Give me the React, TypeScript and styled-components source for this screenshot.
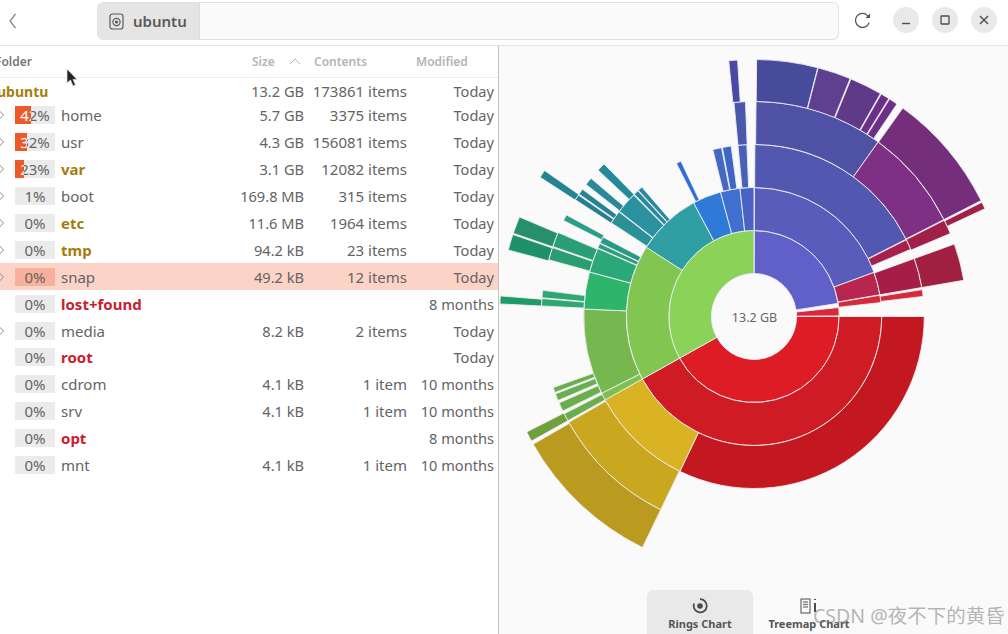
import React from "react";
import styled, { createGlobalStyle } from "styled-components";

const GlobalStyle = createGlobalStyle`
  html, body {
    margin: 0;
    height: 100%;
    background: #fff;
    overflow: hidden;
  }
  * { box-sizing: border-box; }
`;

const Window = styled.div`
  position: relative;
  width: 1008px;
  height: 634px;
  display: flex;
  flex-direction: column;
  font-family: "Noto Sans", "Noto Sans CJK SC", sans-serif;
  color: #646464;
  overflow: hidden;
`;

const Header = styled.header`
  height: 46px;
  flex: none;
  display: flex;
  align-items: flex-start;
  padding: 2px 11px 0 8px;
  background: #fff;
  border-bottom: 1px solid #e4e4e4;
  box-shadow: 0 1px 1px #f0f0f0;
`;

const BackButton = styled.div`
  width: 14px;
  height: 37px;
  display: flex;
  align-items: center;
  color: #8a8a8a;
`;

const PathBar = styled.div`
  width: 742px;
  height: 38px;
  margin-left: 75px;
  display: flex;
  background: #fafafa;
  border: 1px solid #e2e2e2;
  border-radius: 6px;
  overflow: hidden;
`;

const PathCrumb = styled.div`
  width: 102px;
  display: flex;
  align-items: center;
  gap: 9px;
  padding-left: 11px;
  background: #e5e5e5;
  border-right: 1px solid #dcdcdc;
  font-size: 15px;
  font-weight: 600;
  color: #5a5a5a;
`;

const RefreshButton = styled.div`
  width: 20px;
  height: 37px;
  margin-left: 15px;
  display: flex;
  align-items: center;
  color: #555;
`;

const WindowButtons = styled.div`
  display: flex;
  gap: 13px;
  margin-left: 19px;
  margin-top: 5px;
`;

const RoundButton = styled.div`
  width: 26px;
  height: 26px;
  border-radius: 50%;
  background: #e9e9e9;
  display: flex;
  align-items: center;
  justify-content: center;
  color: #4d4d4d;
`;

const Body = styled.div`
  flex: 1;
  display: flex;
  min-height: 0;
`;

const TablePanel = styled.section`
  width: 499px;
  flex: none;
  background: #fff;
  border-right: 1px solid #c4c4c4;
  overflow: hidden;
`;

const Table = styled.div`
  width: 506px;
  margin-left: -8px;
`;

const columns = "23px 40px 1fr 90px 103px 87px";

const HeadRow = styled.div`
  height: 32px;
  display: grid;
  grid-template-columns: ${columns};
  align-items: center;
  padding-right: 4px;
  border-bottom: 1px solid #ececec;
  font-size: 12px;
  font-weight: 600;
  color: #b4b4b4;
`;

const HeadFolder = styled.div`
  grid-column: 1 / 4;
  padding-left: 3px;
  color: #777;
`;

const HeadSize = styled.div`
  display: flex;
  align-items: center;
  justify-content: space-between;
  padding: 0 3px 0 38px;
`;

const HeadCell = styled.div<{ $inset: number }>`
  padding-left: ${({ $inset }) => $inset}px;
`;

const RootRow = styled.div`
  height: 24px;
  padding-top: 2px;
  display: grid;
  grid-template-columns: ${columns};
  align-items: center;
  padding-right: 4px;
  font-size: 15px;
  line-height: 20px;
`;

const Row = styled(RootRow)<{ $active?: boolean }>`
  height: 26.9px;
  padding-top: 0;
  background: ${({ $active }) => ($active ? "#fbd3c7" : "transparent")};
`;

const RootName = styled.div`
  grid-column: 1 / 4;
  padding-left: 5px;
  padding-top: 1px;
  font-size: 14px;
  font-weight: 700;
  color: #a67d0c;
`;

const Toggle = styled.div`
  padding-left: 5px;
  display: flex;
  align-items: center;
  color: #8a8a8a;
`;

const Bar = styled.div<{ $active?: boolean }>`
  position: relative;
  width: 40px;
  height: 18px;
  background: ${({ $active }) => ($active ? "#f7b09b" : "#ebebeb")};
`;

const BarLabel = styled.span`
  display: block;
  width: 40px;
  line-height: 18px;
  text-align: center;
  font-size: 15px;
`;

const BarFill = styled.div`
  position: absolute;
  left: 0;
  top: 0;
  bottom: 0;
  overflow: hidden;
  background: #ee5a27;
  color: #fff;
`;

const Name = styled.div<{ $tone?: "warn" | "error" }>`
  padding-left: 6px;
  font-weight: ${({ $tone }) => ($tone ? 700 : 400)};
  color: ${({ $tone }) =>
    $tone === "warn" ? "#a67d0c" : $tone === "error" ? "#c9202f" : "#646464"};
`;

const Cell = styled.div<{ $wide?: boolean }>`
  text-align: right;
  white-space: nowrap;
  font-size: ${({ $wide }) => ($wide ? 15 : 14.6)}px;
`;

const ChartPanel = styled.section`
  flex: 1;
  display: flex;
  flex-direction: column;
  background: #fafafa;
  min-width: 0;
`;

const ChartArea = styled.div`
  height: 544px;
  flex: none;
`;

const Switcher = styled.div`
  flex: 1;
  display: flex;
  padding-left: 148px;
`;

const SwitchButton = styled.div<{ $active?: boolean }>`
  width: 106px;
  margin-left: ${({ $active }) => ($active ? 0 : 3)}px;
  display: flex;
  flex-direction: column;
  align-items: center;
  padding-top: 6px;
  border-radius: 6px 6px 0 0;
  background: ${({ $active }) => ($active ? "#e9e9e9" : "transparent")};
  font-size: 11px;
  line-height: 15px;
  font-weight: 700;
  color: #555;
  white-space: nowrap;
`;

const SwitchIcon = styled.div`
  height: 20px;
  display: flex;
  align-items: center;
  color: #4a4a4a;
`;

const Watermark = styled.div`
  position: absolute;
  left: 813px;
  top: 603px;
  font-size: 19.5px;
  line-height: 26px;
  color: rgba(120, 120, 120, 0.55);
  white-space: nowrap;
`;

const Pointer = styled.svg`
  position: absolute;
  left: 66px;
  top: 68px;
`;

const CX = 754;
const CY = 316.5;
const SX = 0.99;
const RADII = [43, 86, 129, 172, 215, 257];

const arc = (ring: number, start: number, end: number) => {
  const a0 = (start * Math.PI) / 180;
  const a1 = (end * Math.PI) / 180;
  const r0 = RADII[ring - 1];
  const r1 = RADII[ring];
  const pt = (r: number, a: number) =>
    `${(CX + SX * r * Math.sin(a)).toFixed(2)} ${(CY - r * Math.cos(a)).toFixed(2)}`;
  const big = end - start > 180 ? 1 : 0;
  return [
    `M${pt(r0, a0)}`,
    `A${SX * r0} ${r0} 0 ${big} 1 ${pt(r0, a1)}`,
    `L${pt(r1, a1)}`,
    `A${SX * r1} ${r1} 0 ${big} 0 ${pt(r1, a0)}`,
    "Z",
  ].join(" ");
};

// ring, start angle, end angle (clockwise from 12 o'clock), colour
const segments: [number, number, number, string][] = [
  [1, 0.2, 81.2, "#6060c8"],
  [1, 84, 89.6, "#d8283c"],
  [1, 90, 241, "#dd1c26"],
  [1, 241, 360, "#8bd358"],

  [2, 0.2, 70, "#5a5cbc"],
  [2, 70, 80.3, "#b8264f"],
  [2, 80.5, 83.8, "#d8283c"],
  [2, 90, 241, "#cf1c24"],
  [2, 241, 302.5, "#80c650"],
  [2, 302.5, 331.8, "#2f9fa3"],
  [2, 331.8, 344.8, "#2f7ad8"],
  [2, 344.8, 353.7, "#3f6fcf"],
  [2, 353.7, 360, "#4a62c4"],

  [3, 0.3, 63.3, "#5258b0"],
  [3, 63.5, 67, "#a8204c"],
  [3, 70.3, 80.3, "#a61e48"],
  [3, 81, 83.3, "#d8283c"],
  [3, 90, 205.8, "#c41820"],
  [3, 205.8, 241, "#d9b324"],
  [3, 241, 243.5, "#7cc050"],
  [3, 243.5, 272.5, "#76b84f"],
  [3, 272.5, 285, "#2db56b"],
  [3, 285, 293.3, "#2ca878"],
  [3, 293.5, 295.1, "#2a9f7e"],
  [3, 295.3, 297.5, "#2a9a80"],
  [3, 303, 307.5, "#2a9196"],
  [3, 307.7, 315, "#2b90a0"],
  [3, 315.3, 317, "#288a9e"],
  [3, 317.2, 318.8, "#288a9e"],
  [3, 332.9, 334.6, "#2f6ed8"],
  [3, 346, 349, "#4468c4"],
  [3, 349.3, 352.3, "#3f66c4"],
  [3, 354.6, 357.6, "#4860bc"],

  [4, 0.55, 35.7, "#4f52a4"],
  [4, 35.7, 63.2, "#7e3085"],
  [4, 63.4, 67.3, "#a02048"],
  [4, 70.3, 80.3, "#a02042"],
  [4, 206, 240.5, "#c9a820"],
  [4, 241, 243.1, "#6aae4e"],
  [4, 243.9, 246.3, "#6aae4e"],
  [4, 247, 248.9, "#6aae4e"],
  [4, 249.3, 250.7, "#6aae4e"],
  [4, 272.8, 274.8, "#2da870"],
  [4, 275, 277, "#2da870"],
  [4, 285.3, 288.7, "#2a9e72"],
  [4, 289, 293, "#2a9e76"],
  [4, 296.5, 298.2, "#2a9e86"],
  [4, 302.9, 304.4, "#257f90"],
  [4, 304.7, 306.3, "#25858f"],
  [4, 307.9, 310, "#2a8898"],
  [4, 312.9, 315.2, "#228a98"],
  [4, 354.6, 357.7, "#4a58ac"],

  [5, 0.6, 14.5, "#484a9c"],
  [5, 14.6, 22.2, "#5e3f90"],
  [5, 22.4, 29.8, "#603a88"],
  [5, 30, 32, "#6c3088"],
  [5, 32.2, 34.2, "#6c3088"],
  [5, 35.8, 63.2, "#742e7c"],
  [5, 63.6, 65.2, "#a02048"],
  [5, 206, 240.2, "#bb9a20"],
  [5, 241, 243.3, "#6fa03c"],
  [5, 272.8, 274.6, "#1f9a6a"],
  [5, 285, 288.6, "#1e9168"],
  [5, 288.9, 292.8, "#26906a"],
  [5, 302.8, 304.6, "#268490"],
  [5, 354.3, 356.3, "#4a4aa4"],
];

type Item = {
  name: string;
  pct: number;
  size?: string;
  contents?: string;
  modified: string;
  expandable?: boolean;
  tone?: "warn" | "error";
  active?: boolean;
};

const items: Item[] = [
  { name: "home", pct: 42, size: "5.7 GB", contents: "3375 items", modified: "Today", expandable: true },
  { name: "usr", pct: 32, size: "4.3 GB", contents: "156081 items", modified: "Today", expandable: true },
  { name: "var", pct: 23, size: "3.1 GB", contents: "12082 items", modified: "Today", expandable: true, tone: "warn" },
  { name: "boot", pct: 1, size: "169.8 MB", contents: "315 items", modified: "Today", expandable: true },
  { name: "etc", pct: 0, size: "11.6 MB", contents: "1964 items", modified: "Today", expandable: true, tone: "warn" },
  { name: "tmp", pct: 0, size: "94.2 kB", contents: "23 items", modified: "Today", expandable: true, tone: "warn" },
  { name: "snap", pct: 0, size: "49.2 kB", contents: "12 items", modified: "Today", expandable: true, active: true },
  { name: "lost+found", pct: 0, modified: "8 months", tone: "error" },
  { name: "media", pct: 0, size: "8.2 kB", contents: "2 items", modified: "Today", expandable: true },
  { name: "root", pct: 0, modified: "Today", tone: "error" },
  { name: "cdrom", pct: 0, size: "4.1 kB", contents: "1 item", modified: "10 months" },
  { name: "srv", pct: 0, size: "4.1 kB", contents: "1 item", modified: "10 months" },
  { name: "opt", pct: 0, modified: "8 months", tone: "error" },
  { name: "mnt", pct: 0, size: "4.1 kB", contents: "1 item", modified: "10 months" },
];

const Stroke = { fill: "none", stroke: "currentColor" };

export default function App() {
  return (
    <Window>
      <GlobalStyle />
      <Header>
        <BackButton>
          <svg width="9" height="16" viewBox="0 0 9 16" {...Stroke} strokeWidth="1.3">
            <path d="M7.5 1 2 8l5.5 7" />
          </svg>
        </BackButton>
        <PathBar>
          <PathCrumb>
            <svg width="15" height="17" viewBox="0 0 15 17" {...Stroke} strokeWidth="1.2">
              <rect x="1" y="1" width="13" height="15" rx="2.5" />
              <circle cx="7.5" cy="9" r="3.6" />
              <circle cx="7.5" cy="9" r="1" fill="currentColor" />
            </svg>
            ubuntu
          </PathCrumb>
        </PathBar>
        <RefreshButton>
          <svg width="18" height="18" viewBox="0 0 18 18" {...Stroke} strokeWidth="1.2">
            <path d="M15.2 10.5A7 7 0 1 1 13.6 3.6L15.5 5.5" />
            <path d="M16 1.5v4.5h-4.5" fill="currentColor" stroke="none" />
          </svg>
        </RefreshButton>
        <WindowButtons>
          <RoundButton>
            <svg width="10" height="10" viewBox="0 0 10 10" {...Stroke} strokeWidth="1.4">
              <path d="M1 8.5h8" />
            </svg>
          </RoundButton>
          <RoundButton>
            <svg width="10" height="10" viewBox="0 0 10 10" {...Stroke} strokeWidth="1.3">
              <rect x="1" y="1" width="8" height="8" rx="0.5" />
            </svg>
          </RoundButton>
          <RoundButton>
            <svg width="10" height="10" viewBox="0 0 10 10" {...Stroke} strokeWidth="1.4">
              <path d="M1 1l8 8M9 1 1 9" />
            </svg>
          </RoundButton>
        </WindowButtons>
      </Header>
      <Body>
        <TablePanel>
          <Table>
            <HeadRow>
              <HeadFolder>Folder</HeadFolder>
              <HeadSize>
                Size
                <svg width="12" height="7" viewBox="0 0 12 7" {...Stroke} strokeWidth="1">
                  <path d="M1 6l5-5 5 5" />
                </svg>
              </HeadSize>
              <HeadCell $inset={10}>Contents</HeadCell>
              <HeadCell $inset={9}>Modified</HeadCell>
            </HeadRow>
            <RootRow>
              <RootName>ubuntu</RootName>
              <Cell>13.2 GB</Cell>
              <Cell $wide>173861 items</Cell>
              <Cell>Today</Cell>
            </RootRow>
            {items.map((item) => (
              <Row key={item.name} $active={item.active}>
                <Toggle>
                  {item.expandable && (
                    <svg width="7" height="12" viewBox="0 0 7 12" {...Stroke} strokeWidth="1">
                      <path d="M1.5 1l5 5-5 5" />
                    </svg>
                  )}
                </Toggle>
                <Bar $active={item.active}>
                  <BarLabel>{item.pct}%</BarLabel>
                  {item.pct > 1 && (
                    <BarFill style={{ width: `${item.pct * 0.375}px` }}>
                      <BarLabel>{item.pct}%</BarLabel>
                    </BarFill>
                  )}
                </Bar>
                <Name $tone={item.tone}>{item.name}</Name>
                <Cell>{item.size}</Cell>
                <Cell $wide>{item.contents}</Cell>
                <Cell>{item.modified}</Cell>
              </Row>
            ))}
          </Table>
        </TablePanel>
        <ChartPanel>
          <ChartArea>
            <svg width="509" height="544" viewBox="499 46 509 544">
              {segments.map(([ring, start, end, color]) => (
                <path
                  key={`${ring}-${start}`}
                  d={arc(ring, start, end)}
                  fill={color}
                  stroke="#ececf0"
                  strokeWidth="0.9"
                />
              ))}
              <text
                x={754.5}
                y={CY + 5}
                textAnchor="middle"
                fontSize="12.5"
                fill="#666"
                fontFamily="Noto Sans, sans-serif"
              >
                13.2 GB
              </text>
            </svg>
          </ChartArea>
          <Switcher>
            <SwitchButton $active>
              <SwitchIcon>
                <svg width="18" height="18" viewBox="0 0 18 18" {...Stroke} strokeWidth="1.8">
                  <circle cx="9" cy="9" r="2.8" fill="currentColor" stroke="none" />
                  <path d="M3 6.5A6.6 6.6 0 1 0 9 2.2" />
                </svg>
              </SwitchIcon>
              Rings Chart
            </SwitchButton>
            <SwitchButton>
              <SwitchIcon>
                <svg width="18" height="18" viewBox="0 0 18 18" {...Stroke} strokeWidth="1">
                  <rect x="1" y="2" width="9" height="14" />
                  <path d="M3 5h5M3 7.5h5M3 10h5" strokeWidth="1.4" stroke="#888" />
                  <path d="M15 2v1M15 6v9" strokeWidth="1.6" stroke="#222" />
                </svg>
              </SwitchIcon>
              Treemap Chart
            </SwitchButton>
          </Switcher>
        </ChartPanel>
      </Body>
      <Pointer width="14" height="20" viewBox="0 0 14 20">
        <path d="M1 1v14l3.5-3 2.5 6 2.5-1-2.5-5.6H11z" fill="#222" stroke="#ddd" strokeWidth="0.8" />
      </Pointer>
      <Watermark>CSDN @夜不下的黄昏</Watermark>
    </Window>
  );
}
